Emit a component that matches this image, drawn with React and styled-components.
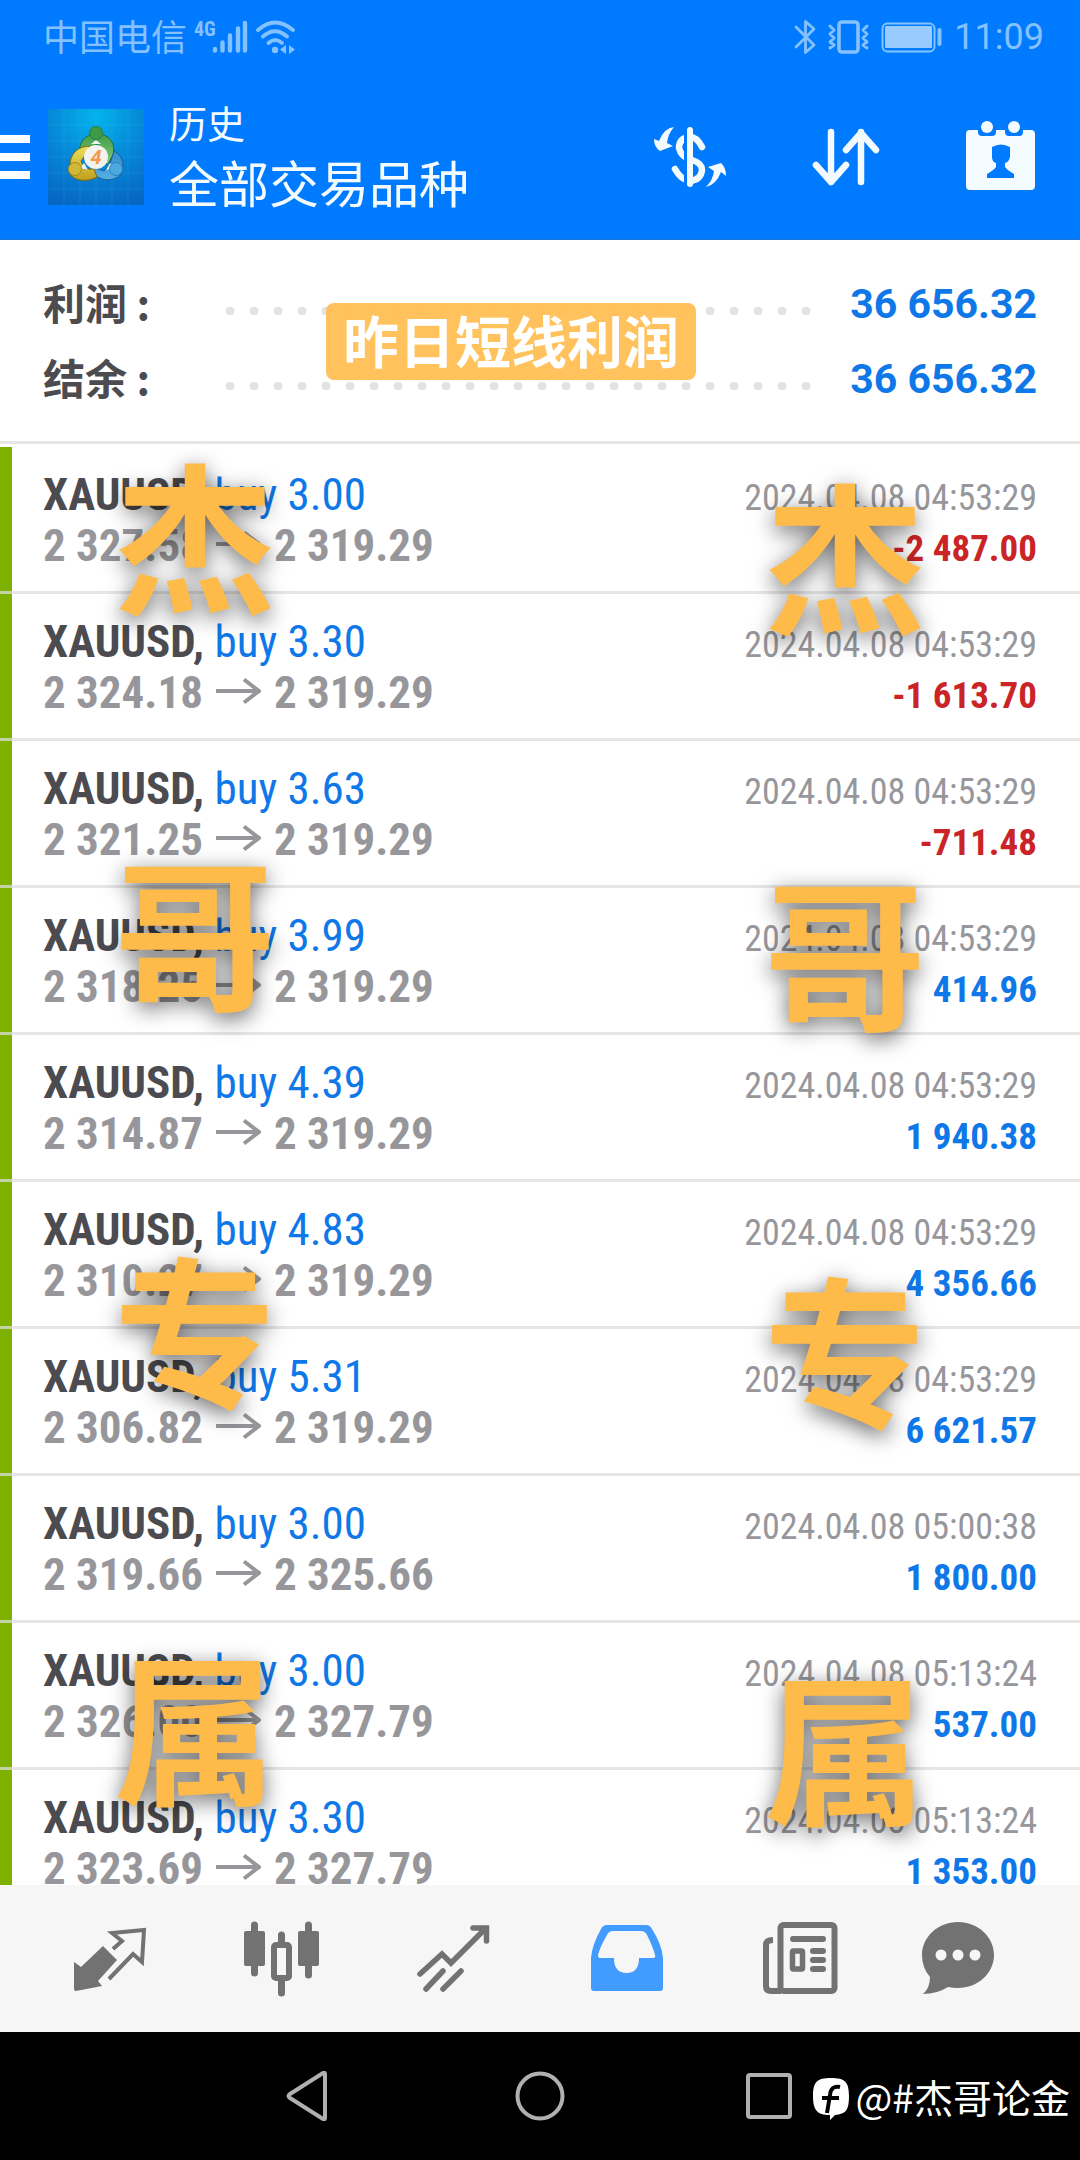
import React from 'react';
import styled, { createGlobalStyle } from 'styled-components';

const GlobalStyle = createGlobalStyle`
    * {
        box-sizing: border-box;
    }
    body {
        margin: 0;
        background: #fff;
    }
    button {
        padding: 0;
        border: none;
        background: none;
        color: inherit;
        font: inherit;
    }
    svg {
        display: block;
        flex: none;
    }
`;

const cjk = `Roboto, "Noto Sans CJK SC", sans-serif`;
const narrow = `"Roboto Condensed", "Liberation Sans Narrow", "Noto Sans CJK SC", sans-serif`;

const Screen = styled.div`
    position: relative;
    display: flex;
    flex-direction: column;
    height: 100vh;
    overflow: hidden;
    font-family: ${cjk};
`;

const Header = styled.header`
    flex: none;
    background: #007aff;
    border-bottom: 1px solid #1a74d2;
    color: #f4fbff;
`;

const StatusBar = styled.div`
    display: flex;
    align-items: center;
    justify-content: space-between;
    height: 74px;
    padding: 0 36px 0 43px;
    color: #84c1ff;
`;

const StatusGroup = styled.div`
    display: flex;
    align-items: center;
    gap: ${props => props.gap};
`;

const Carrier = styled.span`
    padding-top: 4px;
    font-size: 36px;
    line-height: 40px;
`;

const Network = styled.span`
    align-self: flex-start;
    margin-right: -4px;
    font-family: ${narrow};
    font-size: 20px;
    font-weight: 700;
    line-height: 18px;
`;

const Clock = styled.span`
    font-size: 36px;
    line-height: 40px;
`;

const Toolbar = styled.div`
    display: flex;
    align-items: center;
    height: 165px;
    padding-right: 32px;
`;

const MenuButton = styled.button`
    display: grid;
    gap: 10px;
    width: 30px;
    margin-right: 18px;
`;

const MenuBar = styled.span`
    height: 8px;
    background: #fff;
`;

const Titles = styled.div`
    flex: 1;
    padding: 3px 0 0 25px;
`;

const Title = styled.div`
    font-size: 38px;
    line-height: 56px;
`;

const Subtitle = styled.h1`
    margin: 0;
    font-size: 50px;
    font-weight: 400;
    line-height: 66px;
`;

const Actions = styled.div`
    display: flex;
    gap: 60px;
`;

const Summary = styled.section`
    position: relative;
    flex: none;
    padding: 26px 43px 25px;
    border-bottom: 3px solid #e6e6e6;
`;

const SummaryRow = styled.div`
    display: flex;
    align-items: center;
    height: 75px;
`;

const SummaryLabel = styled.span`
    width: 175px;
    padding-bottom: 4px;
    color: #4b4b50;
    font-family: "Noto Sans CJK SC", sans-serif;
    font-size: 42px;
    font-weight: 700;
    line-height: 60px;
`;

const Dots = styled.span`
    flex: 1;
    height: 8px;
    margin: 14px 31px 0 0;
    background: radial-gradient(circle at 12px 4px, #e3e3e3 4px, transparent 5px) repeat-x;
    background-size: 24px 8px;
`;

const SummaryValue = styled.span`
    width: 189px;
    color: #0f78e8;
    font-size: 41px;
    font-weight: 700;
    line-height: 60px;
    text-align: right;
`;

const Tag = styled.div`
    position: absolute;
    top: 63px;
    left: 326px;
    padding: 5px 17px 0;
    border-radius: 8px;
    background: rgba(255, 190, 82, 0.94);
    color: #fff;
    font-size: 56px;
    font-weight: 700;
    line-height: 72px;
`;

const Deals = styled.ul`
    flex: 1;
    min-height: 0;
    margin: 0;
    padding: 3px 0 0;
    overflow: hidden;
    list-style: none;
    font-family: ${narrow};
`;

const Deal = styled.li`
    padding: 22px 43px 20px;
    border-bottom: 3px solid rgba(221, 221, 221, 0.75);
    background: linear-gradient(#7eb000, #7eb000) no-repeat border-box;
    background-size: 12px 100%;
`;

const Line = styled.div`
    display: flex;
    align-items: baseline;
    justify-content: space-between;
    height: 51px;
    font-size: 45px;
    line-height: 51px;
    white-space: pre;
`;

const Symbol = styled.b`
    color: #4b4b50;
`;

const Side = styled.span`
    color: #0f78e8;
`;

const Prices = styled.span`
    display: flex;
    align-items: baseline;
    gap: 13px;
    color: #97979b;
    font-weight: 700;
`;

const Time = styled.time`
    color: #97979b;
    font-size: 36px;
`;

const Profit = styled.b`
    color: ${props => (props.$loss ? '#cb2427' : '#0f78e8')};
    font-size: 37px;
`;

const Tabs = styled.nav`
    display: flex;
    flex: none;
    height: 147px;
    padding: 0 24px;
    background: #f6f6f6;
    color: #727272;
`;

const Tab = styled.button`
    display: flex;
    flex: 1;
    align-items: center;
    justify-content: center;
    color: ${props => (props.$active ? '#429bff' : 'inherit')};
`;

const NavBar = styled.div`
    position: relative;
    display: flex;
    flex: none;
    align-items: center;
    justify-content: center;
    gap: 180px;
    height: 128px;
    background: #000;
    color: #b0b0b0;
`;

const Author = styled.div`
    position: absolute;
    right: 10px;
    display: flex;
    align-items: flex-end;
    gap: 5px;
    color: #fff;
    font-family: "Noto Sans CJK SC", sans-serif;
    font-size: 39px;
    line-height: 50px;
`;

const Watermark = styled.div`
    position: absolute;
    top: ${props => props.$top};
    left: ${props => props.$left};
    display: grid;
    color: #ffbb49;
    font-family: "Noto Sans CJK SC", sans-serif;
    font-size: 162px;
    font-weight: 700;
    line-height: 397px;
    text-shadow: 0 6px 22px rgba(0, 0, 0, 0.6);
    pointer-events: none;
`;

const deals = [
    { volume: '3.00', open: '2 327.58', close: '2 319.29', time: '2024.04.08 04:53:29', profit: '-2 487.00' },
    { volume: '3.30', open: '2 324.18', close: '2 319.29', time: '2024.04.08 04:53:29', profit: '-1 613.70' },
    { volume: '3.63', open: '2 321.25', close: '2 319.29', time: '2024.04.08 04:53:29', profit: '-711.48' },
    { volume: '3.99', open: '2 318.25', close: '2 319.29', time: '2024.04.08 04:53:29', profit: '414.96' },
    { volume: '4.39', open: '2 314.87', close: '2 319.29', time: '2024.04.08 04:53:29', profit: '1 940.38' },
    { volume: '4.83', open: '2 310.27', close: '2 319.29', time: '2024.04.08 04:53:29', profit: '4 356.66' },
    { volume: '5.31', open: '2 306.82', close: '2 319.29', time: '2024.04.08 04:53:29', profit: '6 621.57' },
    { volume: '3.00', open: '2 319.66', close: '2 325.66', time: '2024.04.08 05:00:38', profit: '1 800.00' },
    { volume: '3.00', open: '2 326.00', close: '2 327.79', time: '2024.04.08 05:13:24', profit: '537.00' },
    { volume: '3.30', open: '2 323.69', close: '2 327.79', time: '2024.04.08 05:13:24', profit: '1 353.00' },
];

const Icon = ({ size = 96, children }) => (
    <svg width={size} height={size} viewBox={`0 0 ${size} ${size}`} fill="none" aria-hidden="true">
        {children}
    </svg>
);

const SignalIcon = () => (
    <svg width="36" height="34" viewBox="0 0 36 34" stroke="currentColor" strokeWidth="4.4" strokeLinecap="round">
        <path d="M3 29v1.500M10.500 22.500v8M18 15.500v15M26 8.500v22M33 3v27.500" />
    </svg>
);

const WifiIcon = () => (
    <svg width="42" height="34" viewBox="0 0 42 34" fill="none" stroke="currentColor" strokeWidth="3.8" strokeLinecap="round">
        <path d="M3 10Q20 -5 38 10M8 16.500Q20 6 32 16.500M13.500 23Q20 17 27 23" />
        <circle cx="20" cy="30" r="3.200" fill="currentColor" stroke="none" />
        <path d="M31 25v9l-6 -4.500zM34 25v9l6 -4.500z" fill="currentColor" stroke="none" />
    </svg>
);

const BluetoothIcon = () => (
    <svg width="22" height="36" viewBox="0 0 22 36" fill="none" stroke="currentColor" strokeWidth="2.8" strokeLinejoin="round" strokeLinecap="round">
        <path d="M2 8L20 26L11.500 33.500V2.500L20 10L2 28" />
    </svg>
);

const VibrateIcon = () => (
    <svg width="43" height="36" viewBox="0 0 43 36" fill="none" stroke="currentColor" strokeWidth="3.6" strokeLinejoin="round" strokeLinecap="round">
        <rect x="12" y="3" width="19" height="30" rx="3" />
        <path d="M3 7l4 4l-4 4l4 4l-4 4l4 3l-4 3M40 7l-4 4l4 4l-4 4l4 4l-4 3l4 3" strokeWidth="3" />
    </svg>
);

const BatteryIcon = () => (
    <svg width="62" height="31" viewBox="0 0 62 31" fill="none" stroke="currentColor">
        <rect x="1.500" y="1.500" width="52" height="28" rx="5" strokeWidth="2" />
        <rect x="4" y="4" width="47" height="22" rx="1" fill="#99cbff" stroke="none" />
        <path d="M58.500 8v14" strokeWidth="4" strokeLinecap="round" />
    </svg>
);

const AppLogo = () => (
    <Icon>
        <defs>
            <radialGradient id="sky" cx="50%" cy="8%" r="95%">
                <stop offset="0" stopColor="#04b4ec" />
                <stop offset="0.500" stopColor="#0689d8" />
                <stop offset="1" stopColor="#0668c4" />
            </radialGradient>
            <linearGradient id="green" x1="0" y1="0" x2="0" y2="1">
                <stop offset="0" stopColor="#3f9c48" />
                <stop offset="1" stopColor="#86c878" />
            </linearGradient>
            <linearGradient id="yellow" x1="0" y1="0" x2="0" y2="1">
                <stop offset="0" stopColor="#eadf5a" />
                <stop offset="1" stopColor="#c0a01e" />
            </linearGradient>
            <linearGradient id="blue" x1="0" y1="0" x2="0" y2="1">
                <stop offset="0" stopColor="#2f8fce" />
                <stop offset="1" stopColor="#56aee2" />
            </linearGradient>
        </defs>
        <rect width="96" height="96" fill="url(#sky)" />
        <path d="M16 0v96M32 0v96M48 0v96M64 0v96M80 0v96M0 16h96M0 32h96M0 48h96M0 64h96M0 80h96" stroke="#5cc8ff" strokeOpacity="0.14" />
        <path d="M32 46C30 34 36 25 49 25C62 25 68 35 65 46L60 55H52V40L49 34L45 40L38 46z" fill="url(#green)" stroke="#1f6b3c" />
        <path d="M66 42C75 46 77 58 73 65C68 72 54 73 47 66L44 58L56 62L62 55z" fill="url(#blue)" stroke="#17609c" />
        <path d="M42 37C30 37 22 45 22 56L21 64C27 73 40 73 49 68L46 60L36 60L33 52L38 45z" fill="url(#yellow)" stroke="#7d6a14" />
        <path d="M43 35L48 31L53 35zM32 59L36 54L40 61zM58 61L62 54L66 59z" fill="#e8f4f0" />
        <circle cx="48" cy="24" r="6.500" fill="#3f9a48" stroke="#2a7c3c" />
        <circle cx="27" cy="60" r="6.500" fill="#d2b738" stroke="#a38a1c" />
        <circle cx="68" cy="60" r="6.500" fill="#4ea9e0" stroke="#2b80ba" />
        <circle cx="48" cy="48" r="12" fill="#f2f2ee" />
        <text x="48" y="55" textAnchor="middle" fontSize="20" fontWeight="700" fontStyle="italic" fill="#f59a4a">4</text>
    </Icon>
);

const CurrencyIcon = () => (
    <Icon>
        <path d="M62 38Q57 28 50 28Q39 29 39 39Q41 48 52 51Q62 54 62 61Q61 71 50 72Q41 71 35 60" stroke="currentColor" strokeWidth="6.5" strokeLinecap="round" />
        <path d="M45.500 20v56" stroke="#007aff" strokeWidth="3" />
        <path d="M50 21v54" stroke="currentColor" strokeWidth="6" strokeLinecap="round" />
        <path d="M34 18Q24 19 19 32L14 30Q14 38 20 42L33 37L27 34Q28 25 34 18zM66 78Q76 76 81 63L86 67Q86 58 81 54L68 58L74 62Q73 71 66 78z" fill="currentColor" />
    </Icon>
);

const SortIcon = () => (
    <Icon>
        <path d="M35 23v50M20 56l15 17l15 -17M65 73v-50M50 41l15 -17l15 17" stroke="currentColor" strokeWidth="6.5" strokeLinecap="round" strokeLinejoin="round" />
    </Icon>
);

const PeriodIcon = () => (
    <Icon>
        <path d="M18 21H26V23Q26 27 30 27H40Q44 27 44 23V21H53V23Q53 27 57 27H67Q71 27 71 23V21H79Q83 21 83 25V77Q83 81 79 81H18Q14 81 14 77V25Q14 21 18 21z" fill="currentColor" />
        <circle cx="35" cy="18" r="6" fill="currentColor" />
        <circle cx="62" cy="18" r="6" fill="currentColor" />
        <path d="M40 38Q49 33 58 38V48Q57 53 53 54V58Q55 61 62 65V69H35V65Q42 61 44 58V54Q40 53 40 48z" fill="#007aff" />
    </Icon>
);

const QuotesIcon = () => (
    <Icon>
        <path d="M12 51L19 56L41 35L55 49L36 70L40 75L14 80Q12 80 12 78z" fill="currentColor" />
        <path d="M51 38L60 30L50 22L82 19L80 51L71 43L47 68" stroke="currentColor" strokeWidth="4" />
    </Icon>
);

const ChartIcon = () => (
    <Icon>
        <path d="M20.500 14v48M74.500 14v50M47.500 24v9M47.500 68v14" stroke="currentColor" strokeWidth="7" strokeLinecap="round" />
        <rect x="10" y="20" width="21" height="35" rx="2" fill="currentColor" />
        <rect x="64" y="20" width="21" height="35" rx="2" fill="currentColor" />
        <rect x="40" y="34" width="15" height="33" rx="2" stroke="currentColor" strokeWidth="6" />
    </Icon>
);

const TradeIcon = () => (
    <Icon>
        <path d="M14 63L36 43L45 52L80 17M67 17H80.500V30M20 78L37 60M37 78L55 60" stroke="currentColor" strokeWidth="5.5" strokeLinecap="round" />
    </Icon>
);

const HistoryIcon = () => (
    <Icon>
        <path fillRule="evenodd" d="M29 14H68Q72 14 74 18Q84 34 85 47V77Q85 80 82 80H16Q13 80 13 77V47Q14 34 23 18Q25 14 29 14zM35 20Q31 20 29 24Q22 36 20 44Q20 47 22 47H36Q36 62 48.500 62Q61 62 61 47H75Q78 47 77 44Q75 36 69 24Q67 20 63 20z" fill="currentColor" />
    </Icon>
);

const NewsIcon = () => (
    <Icon>
        <rect x="30.500" y="14" width="54" height="66" rx="3" stroke="currentColor" strokeWidth="6" />
        <path d="M23 29Q16 29 16 34V75Q16 80 21 80H31" stroke="currentColor" strokeWidth="6" />
        <path d="M43 28H73M63 40H73M63 49H73M63 58H73" stroke="currentColor" strokeWidth="6" strokeLinecap="round" />
        <rect x="42.500" y="40" width="10" height="18" rx="1" stroke="currentColor" strokeWidth="5.500" />
    </Icon>
);

const ChatIcon = () => (
    <Icon>
        <path d="M36 11C56 11 72 26 72 44C72 62 56 77 36 77Q31 77 26 76Q15 83 1 83Q8 77 8 66Q0 57 0 44C0 26 16 11 36 11z" fill="currentColor" />
        <circle cx="19" cy="44" r="5.500" fill="#f6f6f6" />
        <circle cx="36" cy="44" r="5.500" fill="#f6f6f6" />
        <circle cx="53" cy="44" r="5.500" fill="#f6f6f6" />
    </Icon>
);

const ArrowIcon = () => (
    <svg width="45" height="34" viewBox="0 0 45 34" fill="none" stroke="currentColor" strokeWidth="4">
        <path d="M0 17H43M28 5.500L43 17L28 28.500" />
    </svg>
);

const AuthorLogo = () => (
    <svg width="37" height="44" viewBox="0 0 37 44">
        <path d="M18 1C32 1 36 5 36 19C36 33 33 37 22 38L17 43V38C4 38 0 33 0 19C0 5 4 1 18 1z" fill="#fff" />
        <path d="M27 10Q18 8 17 18L14 36M9 21H26" fill="none" stroke="#000" strokeWidth="4" />
    </svg>
);

const tabs = [
    { label: '行情', icon: <QuotesIcon /> },
    { label: '图表', icon: <ChartIcon /> },
    { label: '交易', icon: <TradeIcon /> },
    { label: '历史', icon: <HistoryIcon />, active: true },
    { label: '新闻', icon: <NewsIcon /> },
    { label: '消息', icon: <ChatIcon /> },
];

const App = () => {
    return (
        <Screen>
            <GlobalStyle />
            <Header>
                <StatusBar>
                    <StatusGroup gap="7px">
                        <Carrier>中国电信</Carrier>
                        <StatusGroup gap="0">
                            <Network>4G</Network>
                            <SignalIcon />
                        </StatusGroup>
                        <WifiIcon />
                    </StatusGroup>
                    <StatusGroup gap="11px">
                        <BluetoothIcon />
                        <VibrateIcon />
                        <BatteryIcon />
                        <Clock>11:09</Clock>
                    </StatusGroup>
                </StatusBar>
                <Toolbar>
                    <MenuButton aria-label="菜单">
                        <MenuBar />
                        <MenuBar />
                        <MenuBar />
                    </MenuButton>
                    <AppLogo />
                    <Titles>
                        <Title>历史</Title>
                        <Subtitle>全部交易品种</Subtitle>
                    </Titles>
                    <Actions>
                        <button aria-label="品种"><CurrencyIcon /></button>
                        <button aria-label="排序"><SortIcon /></button>
                        <button aria-label="周期"><PeriodIcon /></button>
                    </Actions>
                </Toolbar>
            </Header>
            <Summary>
                <SummaryRow>
                    <SummaryLabel>利润 :</SummaryLabel>
                    <Dots />
                    <SummaryValue>36 656.32</SummaryValue>
                </SummaryRow>
                <SummaryRow>
                    <SummaryLabel>结余 :</SummaryLabel>
                    <Dots />
                    <SummaryValue>36 656.32</SummaryValue>
                </SummaryRow>
                <Tag>昨日短线利润</Tag>
            </Summary>
            <Deals>
                {deals.map((deal, index) => (
                    <Deal key={index}>
                        <Line>
                            <span>
                                <Symbol>XAUUSD, </Symbol>
                                <Side>buy {deal.volume}</Side>
                            </span>
                            <Time>{deal.time}</Time>
                        </Line>
                        <Line>
                            <Prices>
                                <span>{deal.open}</span>
                                <ArrowIcon />
                                <span>{deal.close}</span>
                            </Prices>
                            <Profit $loss={deal.profit.startsWith('-')}>{deal.profit}</Profit>
                        </Line>
                    </Deal>
                ))}
            </Deals>
            <Tabs>
                {tabs.map(tab => (
                    <Tab key={tab.label} aria-label={tab.label} $active={tab.active}>
                        {tab.icon}
                    </Tab>
                ))}
            </Tabs>
            <NavBar>
                <button aria-label="返回">
                    <Icon size={50}>
                        <path d="M40 3V47Q40 49 38 48L5 27Q2 25 5 23L38 2Q40 1 40 3z" stroke="currentColor" strokeWidth="4" />
                    </Icon>
                </button>
                <button aria-label="主页">
                    <Icon size={50}>
                        <circle cx="25" cy="25" r="22.500" stroke="currentColor" strokeWidth="4" />
                    </Icon>
                </button>
                <button aria-label="最近任务">
                    <Icon size={50}>
                        <rect x="3" y="4" width="42" height="42" rx="2" stroke="currentColor" strokeWidth="4" />
                    </Icon>
                </button>
                <Author>
                    <AuthorLogo />
                    <span>@#杰哥论金</span>
                </Author>
            </NavBar>
            <Watermark $top="333px" $left="114px">
                <span>杰</span>
                <span>哥</span>
                <span>专</span>
                <span>属</span>
            </Watermark>
            <Watermark $top="353px" $left="764px">
                <span>杰</span>
                <span>哥</span>
                <span>专</span>
                <span>属</span>
            </Watermark>
        </Screen>
    );
};

export default App;
